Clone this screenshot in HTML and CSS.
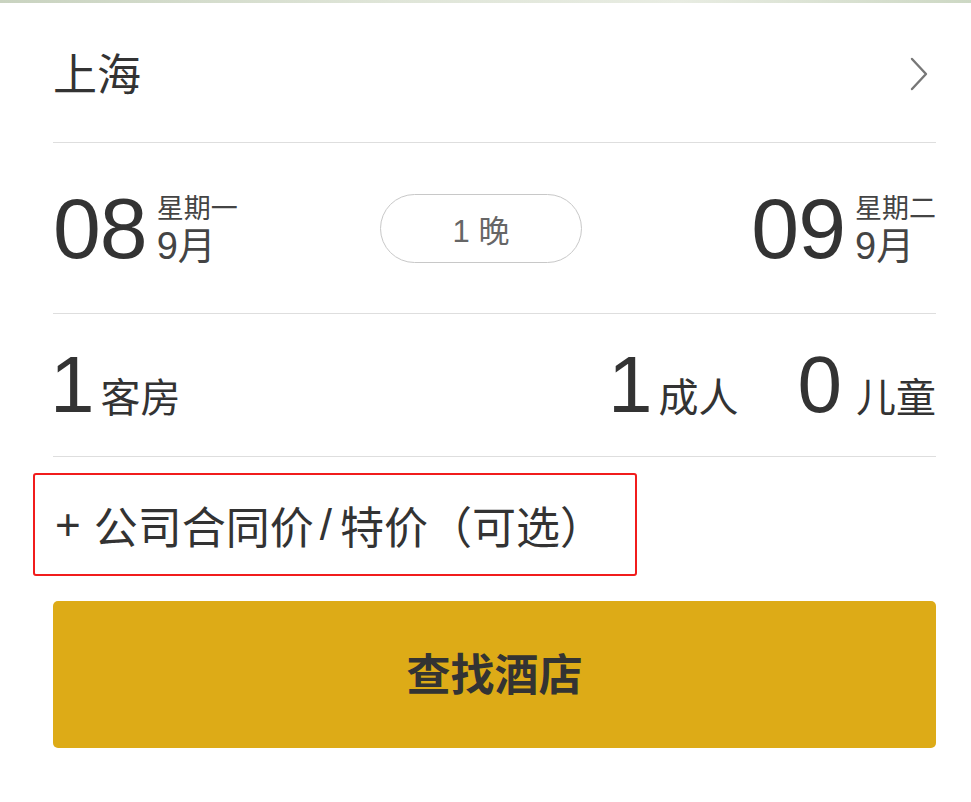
FILE: index.html
```html
<!DOCTYPE html>
<html lang="zh-CN">

<head>
  <meta charset="UTF-8">
  <meta name="viewport" content="width=device-width, initial-scale=1.0">
  <title>酒店查询</title>
  <link rel="stylesheet" href="styles.css">
</head>

<body>
  <div class="top-strip"></div>

  <div class="search">
    <div class="row city">
      <span class="city-name">上海</span>
      <svg class="arrow" width="22" height="36" viewBox="0 0 22 36">
        <polyline points="4,3 18,18 4,33" fill="none" stroke="#777" stroke-width="2.4" stroke-linecap="round" stroke-linejoin="round" />
      </svg>
    </div>

    <div class="row dates">
      <div class="date">
        <span class="day">08</span>
        <div class="date-info">
          <span class="week">星期一</span>
          <span class="month">9月</span>
        </div>
      </div>
      <div class="nights">1 晚</div>
      <div class="date">
        <span class="day">09</span>
        <div class="date-info">
          <span class="week">星期二</span>
          <span class="month">9月</span>
        </div>
      </div>
    </div>

    <div class="row guests">
      <div class="count rooms">
        <span class="num">1</span>
        <span class="label">客房</span>
      </div>
      <div class="people">
        <div class="count">
          <span class="num">1</span>
          <span class="label">成人</span>
        </div>
        <div class="count kids">
          <span class="num">0</span>
          <span class="label">儿童</span>
        </div>
      </div>
    </div>

    <div class="promo"><span class="plus">+</span>公司合同价<span class="slash">/</span>特价（可选）</div>

    <button class="btn">查找酒店</button>
  </div>
</body>

</html>
```

FILE: styles.css
```css
* {
  margin: 0;
  padding: 0;
  box-sizing: border-box;
}

body {
  background: #fff;
  color: #333;
  font-family: "Liberation Sans", "Noto Sans CJK SC", sans-serif;
  width: 971px;
  height: 802px;
  overflow: hidden;
}

.top-strip {
  height: 3px;
  background: linear-gradient(90deg, #c9d3c0, #dfe5d8 40%, #e8ece2 70%, #cdd8c4);
}

.search {
  padding: 0 35px 0 53px;
}

.row {
  display: flex;
  justify-content: space-between;
  border-bottom: 1px solid #dedede;
}

.city {
  height: 140px;
  align-items: center;
}

.city-name {
  font-size: 44px;
  color: #333;
  margin-top: -1px;
}

.arrow {
  margin-right: 6px;
  margin-top: 2px;
}

.dates {
  height: 171px;
  align-items: center;
}

.date {
  display: flex;
  align-items: flex-end;
  gap: 10px;
}

.day {
  font-size: 86px;
  line-height: 1;
  letter-spacing: -1px;
  color: #333;
}

.date-info {
  display: flex;
  flex-direction: column;
  padding-bottom: 5px;
}

.week {
  font-size: 27px;
  line-height: 34px;
  color: #444;
}

.month {
  font-size: 38px;
  line-height: 40px;
  color: #444;
}

.nights {
  width: 202px;
  height: 69px;
  border: 1.5px solid #c8c8c8;
  border-radius: 35px;
  display: flex;
  align-items: center;
  justify-content: center;
  font-size: 31px;
  color: #666;
  margin-right: 27px;
}

.guests {
  height: 143px;
  align-items: center;
}

.people {
  display: flex;
  gap: 59px;
}

.count {
  display: flex;
  align-items: baseline;
  gap: 6px;
}

.count.kids {
  gap: 14px;
}

.rooms .num {
  margin-left: -3px;
}

.num {
  font-size: 80px;
  line-height: 1;
  color: #333;
}

.label {
  font-size: 40px;
  color: #333;
}

.promo {
  margin: 16px 0 0 -20px;
  width: 604px;
  height: 103px;
  border: 2.5px solid #f11c1c;
  border-radius: 3px;
  padding-left: 20px;
  display: flex;
  align-items: center;
  font-size: 44px;
  color: #333;
}

.plus {
  margin-right: 13px;
}

.slash {
  margin: 0 8px 0 6px;
}

.btn {
  display: block;
  width: 100%;
  height: 147px;
  margin-top: 25px;
  padding-bottom: 6px;
  border: none;
  border-radius: 5px;
  background: #ddab17;
  color: #333;
  font-family: inherit;
  font-size: 44px;
  font-weight: bold;
}
```
